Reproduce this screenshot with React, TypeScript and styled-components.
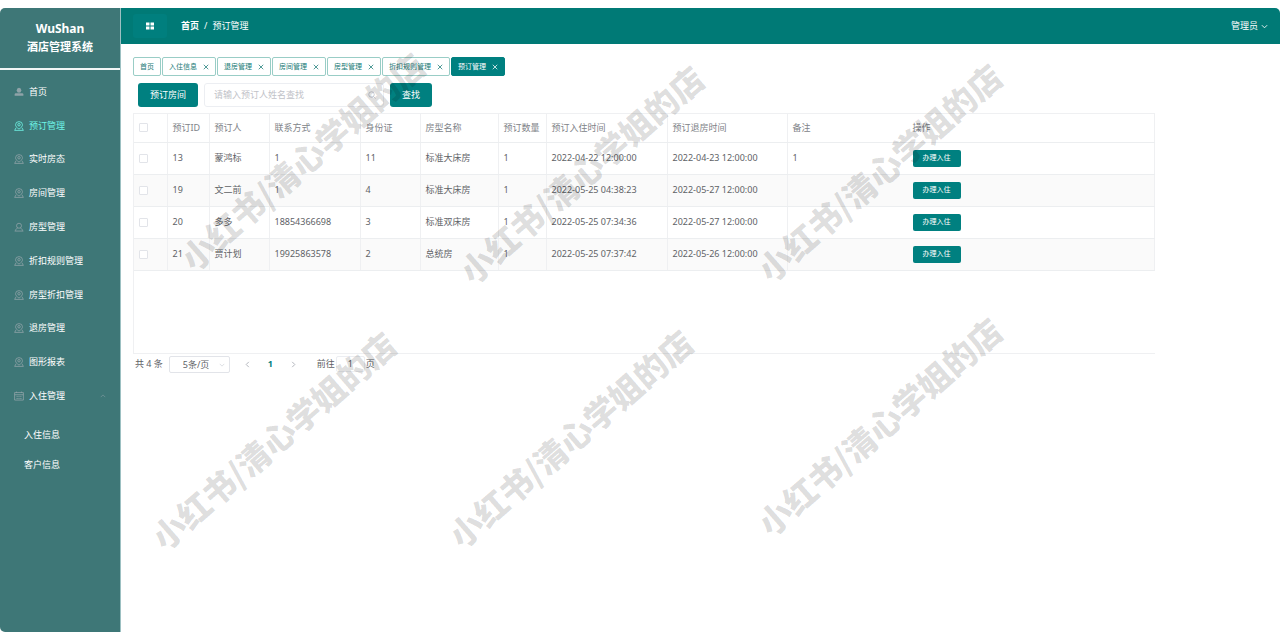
import React from 'react';
import styled, { createGlobalStyle, css } from 'styled-components';

const GlobalStyle = createGlobalStyle`
  * { box-sizing: border-box; }
  body {
    margin: 0;
    background: #fff;
    color: #606266;
    font: 9px/16px "Noto Sans", "Noto Sans CJK SC", sans-serif;
  }
  button, input, select { font: inherit; color: inherit; margin: 0; }
  a { color: inherit; text-decoration: none; }
`;

const Shell = styled.div`
  position: relative;
  display: grid;
  grid-template-columns: 121px minmax(0, 1fr);
  min-height: calc(100vh - 16px);
  margin: 8px 0;
  border-radius: 5px;
  overflow: hidden;
`;

const Sidebar = styled.aside`
  background: #3e7777;
  border-right: 1px solid #9cc0c2;
  color: #fff;
`;

const Brand = styled.h1`
  margin: 0;
  height: 62px;
  padding-top: 12px;
  border-bottom: 2px solid #f2f6f6;
  font-size: 11px;
  font-weight: 700;
  line-height: 18px;
  text-align: center;
`;

const BrandName = styled.span`
  display: block;
  font-size: 12px;
`;

const Menu = styled.nav`
  display: grid;
  grid-auto-rows: 1fr;
  height: 338px;
  margin-top: 5px;
`;

const MenuLink = styled.a<{ $active?: boolean }>`
  display: flex;
  align-items: center;
  gap: 5px;
  padding: 0 14px;
  color: ${(p) => (p.$active ? '#6ff5e6' : '#fff')};

  svg { color: ${(p) => (p.$active ? '#6ff5e6' : '#8fa3a8')}; }
`;

const Caret = styled.span`
  display: flex;
  margin-left: auto;
`;

const SubMenu = styled.nav`
  display: grid;
  grid-auto-rows: 30px;
  align-items: center;
  margin-top: 7px;
  padding-left: 24px;
`;

const Page = styled.div`
  display: flex;
  flex-direction: column;
  min-width: 0;
`;

const TopBar = styled.header`
  display: flex;
  align-items: center;
  height: 36px;
  padding: 0 12px;
  background: #007a76;
  color: #fff;
`;

const CollapseButton = styled.button`
  display: grid;
  place-items: center;
  width: 34px;
  height: 24px;
  padding: 0;
  border: 0;
  border-radius: 3px;
  background: #007f7e;
  color: #fff;
`;

const Crumbs = styled.nav`
  display: flex;
  gap: 5px;
  margin-left: 14px;
`;

const Crumb = styled.a`
  font-weight: 700;
`;

const UserMenu = styled.button`
  display: flex;
  align-items: center;
  gap: 3px;
  margin-left: auto;
  padding: 0;
  border: 0;
  background: none;
  color: #fff;
`;

const Content = styled.main`
  flex: 1;
  padding: 13px 12px;
`;

const TabStrip = styled.div`
  display: flex;
  gap: 1px;
`;

const Tab = styled.div<{ $active?: boolean }>`
  display: flex;
  align-items: center;
  gap: 6px;
  height: 19px;
  padding: 0 6px;
  border: 1px solid ${(p) => (p.$active ? '#008080' : '#99cdc6')};
  border-radius: 2px;
  background: ${(p) => (p.$active ? '#008080' : '#fff')};
  color: ${(p) => (p.$active ? '#fff' : '#187a76')};
  font-size: 7px;
`;

const TabClose = styled.button`
  display: grid;
  place-items: center;
  width: 6px;
  height: 10px;
  padding: 0;
  border: 0;
  background: none;
`;

const Toolbar = styled.div`
  display: flex;
  align-items: center;
  gap: 6px;
  margin: 7px 0 6px 5px;
`;

const PrimaryButton = styled.button<{ $small?: boolean }>`
  border: 0;
  background: #008080;
  color: #fff;
  ${(p) =>
    p.$small
      ? css`
          display: block;
          height: 17px;
          padding: 0 10px;
          border-radius: 2px;
          font-size: 7px;
        `
      : css`
          height: 24px;
          padding: 0 12px;
          border-radius: 3px;
        `}
`;

const SearchBox = styled.label`
  display: flex;
  align-items: center;
  width: 180px;
  height: 24px;
  padding: 0 7px 0 9px;
  border: 1px solid #eceef2;
  border-radius: 3px;
  color: #b4b8c0;
`;

const SearchInput = styled.input`
  flex: 1;
  min-width: 0;
  padding: 0;
  border: 0;
  outline: 0;
  background: none;
  color: #606266;
  &::placeholder { color: #bfc2c8; }
`;

const TableFrame = styled.div`
  width: 90%;
  min-height: 241px;
  border: solid #eff0f2;
  border-width: 1px 0 1px 1px;
`;

const Table = styled.table`
  width: 100%;
  table-layout: fixed;
  border-collapse: collapse;

  th, td {
    height: 32px;
    padding: 0 5px;
    border-right: 1px solid #eff0f2;
    border-bottom: 1px solid #eceef0;
    text-align: left;
    white-space: nowrap;
  }
  th {
    height: 28px;
    color: #808388;
    font-weight: 400;
  }
  th:nth-child(10), td:nth-child(10) { border-right-color: transparent; }
  tbody tr:nth-child(even) { background: #fafafa; }
`;

const Col = styled.col<{ $width?: number }>`
  width: ${(p) => (p.$width ? `${p.$width}px` : 'auto')};
`;

const Check = styled.input`
  appearance: none;
  display: block;
  width: 9px;
  height: 9px;
  border: 1px solid #e2e4e9;
  border-radius: 1px;
  background: #fff;
`;

const Pager = styled.div`
  display: flex;
  align-items: center;
  height: 20px;
  padding-left: 2px;
`;

const SizePicker = styled.span`
  position: relative;
  display: flex;
  margin: 0 6px;

  svg {
    position: absolute;
    right: 5px;
    top: 6px;
    color: #c0c4cc;
    pointer-events: none;
  }
`;

const SizeSelect = styled.select`
  appearance: none;
  width: 61px;
  height: 17px;
  padding: 0 20px 0 13px;
  border: 1px solid #e2e4e9;
  border-radius: 2px;
  background: #fff;
  line-height: 15px;
`;

const PageButton = styled.button<{ $current?: boolean }>`
  display: grid;
  place-items: center;
  width: 23px;
  height: 17px;
  padding: 0;
  border: 0;
  background: none;
  color: ${(p) => (p.$current ? '#008080' : '#a9adb5')};
  font-weight: 700;
`;

const Jumper = styled.label`
  display: flex;
  align-items: center;
  gap: 1px;
  margin-left: 12px;
`;

const JumpInput = styled.input`
  width: 29px;
  height: 16px;
  padding: 0;
  border: 1px solid #eceef2;
  border-radius: 2px;
  background: none;
  text-align: center;
`;

const Watermark = styled.span<{ $x: number; $y: number }>`
  position: absolute;
  left: ${(p) => p.$x}px;
  top: ${(p) => p.$y}px;
  transform: translate(-50%, -50%) rotate(-41deg);
  color: rgba(0, 0, 0, 0.14);
  font: 900 33px/40px "Noto Sans CJK SC", sans-serif;
  white-space: nowrap;
  pointer-events: none;
`;

type Shape = 'userSolid' | 'user' | 'pin' | 'calendar' | 'up' | 'down' | 'left' | 'right' | 'close' | 'search' | 'grid';

const shapes: Record<Shape, React.ReactNode> = {
  userSolid: (
    <g fill="currentColor" stroke="none">
      <ellipse cx="8" cy="5" rx="3.6" ry="4" />
      <path d="M1 14v-2q0-2 2-2h10q2 0 2 2v2z" />
    </g>
  ),
  user: <path d="M8 2a4 4 0 1 0 0 8 4 4 0 0 0 0-8M2.500 14c0-2.500 1.500-3.500 3.500-4.500m7.500 4.500c0-2.500-1.500-3.500-3.500-4.500M1 14.500h14" />,
  pin: (
    <>
      <path d="M8 13C4 10 2.500 8.500 2.500 6a5.500 5 0 0 1 11 0c0 2.500-1.500 4-5.500 7z" />
      <circle cx="8" cy="6" r="2" />
      <path d="M3.500 10.500L1 15h14l-2.500-4.500" />
    </>
  ),
  calendar: <path d="M1 2.500h14v12H1zM1 6h14M4 1v2M12 1v2M4 9h2M7 9h2M10 9h2M4 12h2M7 12h2M10 12h2" />,
  up: <path d="M2 11l6-6 6 6" />,
  down: <path d="M2 5l6 6 6-6" />,
  left: <path d="M11 2L5 8l6 6" />,
  right: <path d="M5 2l6 6-6 6" />,
  close: <path d="M2 2l12 12M14 2L2 14" />,
  search: <path d="M7 1.500a5.500 5.500 0 1 0 0 11 5.500 5.500 0 0 0 0-11M11 11l4 4" />,
  grid: <path fill="currentColor" stroke="none" d="M0 1h7v6H0zM9 1h7v6H9zM0 9h7v6H0zM9 9h7v6H9z" />,
};

const Icon = ({ shape, size = 10, weight = 1.4 }: { shape: Shape; size?: number; weight?: number }) => (
  <svg width={size} height={size} viewBox="0 0 16 16" fill="none" stroke="currentColor" strokeWidth={weight} aria-hidden="true">
    {shapes[shape]}
  </svg>
);

const menuItems: { label: string; shape: Shape }[] = [
  { label: '首页', shape: 'userSolid' },
  { label: '预订管理', shape: 'pin' },
  { label: '实时房态', shape: 'pin' },
  { label: '房间管理', shape: 'pin' },
  { label: '房型管理', shape: 'user' },
  { label: '折扣规则管理', shape: 'pin' },
  { label: '房型折扣管理', shape: 'pin' },
  { label: '退房管理', shape: 'pin' },
  { label: '图形报表', shape: 'pin' },
  { label: '入住管理', shape: 'calendar' },
];

const tabs = ['首页', '入住信息', '退房管理', '房间管理', '房型管理', '折扣规则管理', '预订管理'];

const columns = ['预订ID', '预订人', '联系方式', '身份证', '房型名称', '预订数量', '预订入住时间', '预订退房时间', '备注', '操作'];
const widths = [33, 42, 60, 91, 60, 78, 48, 121, 120, 120];

const bookings = [
  ['13', '蒙鸿标', '1', '11', '标准大床房', '1', '2022-04-22 12:00:00', '2022-04-23 12:00:00', '1'],
  ['19', '文二前', '1', '4', '标准大床房', '1', '2022-05-25 04:38:23', '2022-05-27 12:00:00', ''],
  ['20', '多多', '18854366698', '3', '标准双床房', '1', '2022-05-25 07:34:36', '2022-05-27 12:00:00', ''],
  ['21', '贾计划', '19925863578', '2', '总统房', '1', '2022-05-25 07:37:42', '2022-05-26 12:00:00', ''],
];

const watermarks = [
  [302, 153], [581, 166], [879, 164],
  [273, 432], [570, 430], [879, 418],
];

export default function App() {
  return (
    <>
      <GlobalStyle />
      <Shell>
        <Sidebar>
          <Brand><BrandName>WuShan</BrandName>酒店管理系统</Brand>
          <Menu>
            {menuItems.map((item) => (
              <MenuLink key={item.label} href="#" $active={item.label === '预订管理'}>
                <Icon shape={item.shape} weight={1.3} />
                {item.label}
                {item.shape === 'calendar' && <Caret><Icon shape="up" size={6} /></Caret>}
              </MenuLink>
            ))}
          </Menu>
          <SubMenu>
            <a href="#">入住信息</a>
            <a href="#">客户信息</a>
          </SubMenu>
        </Sidebar>
        <Page>
          <TopBar>
            <CollapseButton aria-label="折叠菜单"><Icon shape="grid" size={8} /></CollapseButton>
            <Crumbs>
              <Crumb href="#">首页</Crumb>
              <span>/</span>
              <span>预订管理</span>
            </Crumbs>
            <UserMenu>管理员<Icon shape="down" size={7} weight={2} /></UserMenu>
          </TopBar>
          <Content>
            <TabStrip>
              {tabs.map((tab, i) => (
                <Tab key={tab} $active={tab === '预订管理'}>
                  {tab}
                  {i > 0 && <TabClose aria-label={`关闭${tab}`}><Icon shape="close" size={6} weight={2} /></TabClose>}
                </Tab>
              ))}
            </TabStrip>
            <Toolbar>
              <PrimaryButton>预订房间</PrimaryButton>
              <SearchBox>
                <SearchInput aria-label="预订人姓名" placeholder="请输入预订人姓名查找" />
                <Icon shape="search" size={8} />
              </SearchBox>
              <PrimaryButton>查找</PrimaryButton>
            </Toolbar>
            <TableFrame>
              <Table>
                <colgroup>
                  {widths.map((w, i) => <Col key={i} $width={w} />)}
                  <Col />
                </colgroup>
                <thead>
                  <tr>
                    <th><Check type="checkbox" aria-label="全选" /></th>
                    {columns.map((c) => <th key={c}>{c}</th>)}
                  </tr>
                </thead>
                <tbody>
                  {bookings.map((row) => (
                    <tr key={row[0]}>
                      <td><Check type="checkbox" aria-label={`选择 ${row[0]}`} /></td>
                      {row.map((cell, i) => <td key={i}>{cell}</td>)}
                      <td><PrimaryButton $small>办理入住</PrimaryButton></td>
                    </tr>
                  ))}
                </tbody>
              </Table>
            </TableFrame>
            <Pager>
              <span>共 4 条</span>
              <SizePicker>
                <SizeSelect aria-label="每页条数"><option>5条/页</option></SizeSelect>
                <Icon shape="down" size={6} />
              </SizePicker>
              <PageButton aria-label="上一页"><Icon shape="left" size={7} weight={2} /></PageButton>
              <PageButton $current>1</PageButton>
              <PageButton aria-label="下一页"><Icon shape="right" size={7} weight={2} /></PageButton>
              <Jumper>前往<JumpInput defaultValue="1" />页</Jumper>
            </Pager>
          </Content>
        </Page>
        {watermarks.map(([x, y]) => (
          <Watermark key={`${x}-${y}`} $x={x} $y={y}>小红书/清心学姐的店</Watermark>
        ))}
      </Shell>
    </>
  );
}
